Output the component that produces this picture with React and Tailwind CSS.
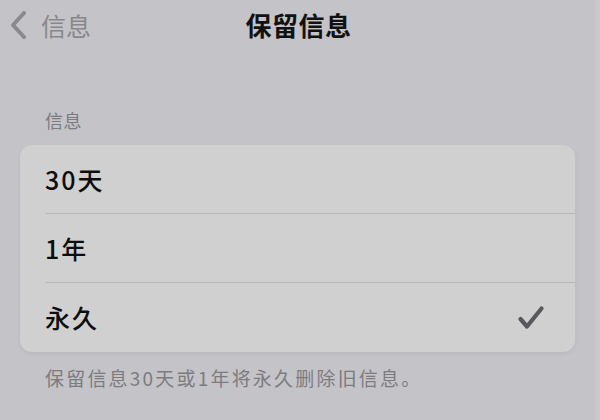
import React from 'react';

const FONT = { fontFamily: '"Noto Sans CJK SC", "Noto Sans", sans-serif' };

const options = [
    { name: "30天", checked: false },
    { name: "1年", checked: false },
    { name: "永久", checked: true },
];

function Chevron() {
    return (
        <svg width="22" height="28" viewBox="0 0 22 28" fill="none">
            <path d="M17 2 L6 14 L17 26" stroke="#8a8a8e" strokeWidth="4" strokeLinecap="round" strokeLinejoin="round"/>
        </svg>
    );
}

function Check() {
    return (
        <svg width="28" height="26" viewBox="0 0 28 26" fill="none">
            <path d="M3.5 14 L10 21.5 L24.5 3.5" stroke="#58585c" strokeWidth="4.2" strokeLinecap="round" strokeLinejoin="round"/>
        </svg>
    );
}

export default function App() {
    return (
        <div className="flex h-[420px] w-[600px] overflow-hidden bg-[#c4c3c8]" style={FONT}>
            <div className="flex flex-1 flex-col">
                <header className="relative flex h-[50px] items-center justify-center">
                    <div className="absolute left-[7px] top-[11px] flex items-center gap-[12px]">
                        <Chevron/>
                        <span className="text-[25px] leading-none text-[#88888c]">信息</span>
                    </div>
                    <h1 className="pl-[2px] text-[26px] font-bold leading-none tracking-[0.5px] text-[#111]">保留信息</h1>
                </header>

                <div className="pl-[45px] pt-[61px] text-[18px] leading-none tracking-[0.5px] text-[#7b7b80]">信息</div>

                <div className="mx-[20px] mt-[16px] w-[555px] rounded-[12px] bg-[#d0d0d0] shadow-[0_2px_4px_rgba(0,0,0,0.06)]">
                    {options.map((o, i) => (
                        <div key={o.name} className="flex h-[69px] pl-[25px]">
                            <div className={`flex flex-1 items-center justify-between pr-[30px] ${i < options.length - 1 ? "border-b border-[#b9b9bb]" : ""}`}>
                                <span className="text-[25px] font-medium leading-none tracking-[2px] text-[#0d0d0d]">{o.name}</span>
                                {o.checked && <Check/>}
                            </div>
                        </div>
                    ))}
                </div>

                <p className="pl-[45px] pt-[16px] text-[19px] leading-none tracking-[2.2px] text-[#7c7c80]">
                    保留信息30天或1年将永久删除旧信息。
                </p>
            </div>
            <div className="w-[7px] bg-[#c9c8cc]"/>
        </div>
    );
}
